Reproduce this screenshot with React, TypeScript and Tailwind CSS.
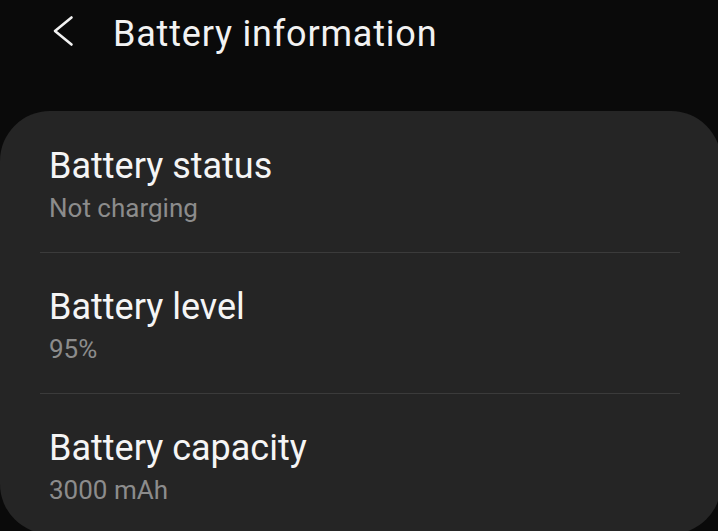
import React from "react";

const rows = [
  { title: "Battery status", sub: "Not charging" },
  { title: "Battery level", sub: "95%" },
  { title: "Battery capacity", sub: "3000 mAh" },
];

export default function App() {
  return (
    <div
      className="w-[718px] h-[531px] overflow-hidden bg-[#0a0a0a] flex flex-col"
      style={{ fontFamily: "Roboto, 'Noto Sans', sans-serif" }}
    >
      <header className="h-[111px] shrink-0 flex items-start">
        <div className="w-[113px] pt-[15px] pl-[52px]">
          <svg width="22" height="32" viewBox="0 0 22 32" fill="none" className="block">
            <path d="M19.5 2.5 L3 16 L19.5 29.5" stroke="#f2f2f2" strokeWidth="2.6" strokeLinecap="round" strokeLinejoin="round" />
          </svg>
        </div>
        <h1 className="mt-[12px] text-[36px] leading-[44px] tracking-[0.8px] text-[#f2f2f2] font-normal">
          Battery information
        </h1>
      </header>
      <div className="shrink-0 w-[721px] h-[423px] bg-[#252525] rounded-[50px] pt-[1px]">
        {rows.map((r, i) => (
          <div key={r.title}>
            {i > 0 && <div className="ml-[40px] mr-[41px] h-px bg-[#3b3b3b]" />}
            <div className="px-[49px] pt-[34px] pb-[29px]">
              <div className="text-[36px] leading-[40px] text-[#f5f5f5]">{r.title}</div>
              <div className="mt-[7px] text-[26px] leading-[30px] text-[#8c8c8c]">{r.sub}</div>
            </div>
          </div>
        ))}
      </div>
    </div>
  );
}
